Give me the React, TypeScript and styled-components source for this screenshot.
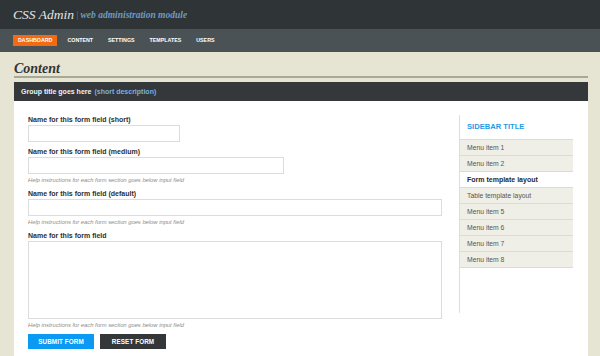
import React from 'react';
import styled, { createGlobalStyle } from 'styled-components';

const GlobalStyle = createGlobalStyle`
  html, body {
    margin: 0;
    padding: 0;
    background: #e6e4d3;
  }
  body {
    font-family: "Liberation Sans", Arial, sans-serif;
    width: 600px;
    height: 356px;
    overflow: hidden;
  }
`;

const Header = styled.div`
  height: 29px;
  background: #2f3437;
  display: flex;
  align-items: center;
  padding-left: 13px;
  font-family: "Liberation Serif", "Times New Roman", serif;
  font-style: italic;
`;

const Logo = styled.span`
  color: #e4e6e8;
  font-size: 13.5px;
  margin-right: 2px;
`;

const Tagline = styled.span`
  color: #6c9bc6;
  font-size: 9.5px;
  font-weight: bold;
  span {
    color: #5c7d98;
    font-weight: normal;
    margin-right: 2px;
  }
`;

const Nav = styled.div`
  height: 23px;
  background: #4b5256;
  display: flex;
  align-items: center;
  padding-left: 13px;
  gap: 5px;
`;

const NavItem = styled.a<{ $active?: boolean }>`
  display: block;
  padding: 0 5px;
  line-height: 11px;
  font-size: 5.3px;
  font-weight: bold;
  color: #fff;
  text-transform: uppercase;
  background: ${p => (p.$active ? '#f26a12' : 'transparent')};
`;

const Main = styled.div`
  padding: 0 12px 0 14px;
`;

const PageTitle = styled.h1`
  margin: 0;
  padding-top: 10px;
  height: 14px;
  line-height: 14px;
  font-family: "Liberation Serif", "Times New Roman", serif;
  font-style: italic;
  font-weight: bold;
  font-size: 14px;
  color: #2f3437;
  border-bottom: 2px solid #a9a796;
`;

const GroupBar = styled.div`
  margin-top: 4px;
  height: 19px;
  background: #34383b;
  display: flex;
  align-items: center;
  padding-left: 7px;
  font-size: 7px;
  font-weight: bold;
  color: #f2f2f2;
  span {
    color: #7ab0de;
    margin-left: 3px;
  }
`;

const Panel = styled.div`
  background: #fff;
  display: flex;
  padding: 14px 15px 0 14px;
  height: 242px;
`;

const Form = styled.form`
  width: 414px;
  margin-right: 17px;
`;

const Field = styled.div`
  margin-bottom: 5px;
`;

const Label = styled.label`
  display: block;
  font-size: 7px;
  line-height: 10px;
  font-weight: bold;
  color: #2e2e2e;
`;

const Input = styled.input<{ $width: number }>`
  display: block;
  box-sizing: border-box;
  width: ${p => p.$width}px;
  height: 17px;
  margin: 0;
  border: 1px solid #dcdcdc;
  background: #fff;
`;

const TextArea = styled.textarea`
  display: block;
  box-sizing: border-box;
  width: 414px;
  height: 78px;
  margin: 0;
  border: 1px solid #dcdcdc;
  resize: none;
`;

const Help = styled.div`
  margin-top: 2px;
  font-size: 5.8px;
  line-height: 8px;
  font-style: italic;
  color: #8c8c8c;
`;

const Buttons = styled.div`
  display: flex;
  gap: 6px;
  margin-top: 2px;
`;

const Button = styled.button<{ $dark?: boolean }>`
  width: 66px;
  height: 15px;
  padding: 0;
  border: none;
  font-family: "Liberation Sans", Arial, sans-serif;
  font-size: 6.3px;
  font-weight: bold;
  letter-spacing: 0.1px;
  color: #fff;
  background: ${p => (p.$dark ? '#33373a' : '#0a9af4')};
`;

const Sidebar = styled.div`
  width: 114px;
  height: 198px;
  border-left: 1px solid #dddddd;
`;

const SidebarTitle = styled.div`
  height: 24px;
  line-height: 24px;
  padding-left: 7px;
  font-size: 7.6px;
  font-weight: bold;
  color: #1f9ae6;
`;

const Menu = styled.ul`
  list-style: none;
  margin: 0;
  padding: 0;
`;

const MenuItem = styled.li<{ $active?: boolean }>`
  height: 15px;
  line-height: 15px;
  padding-left: 7px;
  border-top: 1px solid #dedcd2;
  font-size: ${p => (p.$active ? '7px' : '6.8px')};
  font-weight: ${p => (p.$active ? 'bold' : 'normal')};
  color: ${p => (p.$active ? '#2a2a2a' : '#555')};
  background: ${p => (p.$active ? '#fff' : '#f0efe7')};
  &:last-child {
    border-bottom: 1px solid #dedcd2;
  }
`;

const navItems = ['Dashboard', 'Content', 'Settings', 'Templates', 'Users'];

const menuItems = [
  'Menu item 1',
  'Menu item 2',
  'Form template layout',
  'Table template layout',
  'Menu item 5',
  'Menu item 6',
  'Menu item 7',
  'Menu item 8',
];

const helpText = 'Help instructions for each form section goes below input field';

export default function App() {
  return (
    <React.Fragment>
      <GlobalStyle />
      <Header>
        <Logo>CSS Admin</Logo>
        <Tagline><span>|</span>web administration module</Tagline>
      </Header>
      <Nav>
        {navItems.map((item, i) => (
          <NavItem key={item} $active={i === 0}>{item}</NavItem>
        ))}
      </Nav>
      <Main>
        <PageTitle>Content</PageTitle>
        <GroupBar>Group title goes here<span>(short description)</span></GroupBar>
        <Panel>
          <Form onSubmit={e => e.preventDefault()}>
            <Field>
              <Label>Name for this form field (short)</Label>
              <Input $width={152} />
            </Field>
            <Field>
              <Label>Name for this form field (medium)</Label>
              <Input $width={256} />
              <Help>{helpText}</Help>
            </Field>
            <Field>
              <Label>Name for this form field (default)</Label>
              <Input $width={414} />
              <Help>{helpText}</Help>
            </Field>
            <Field>
              <Label>Name for this form field</Label>
              <TextArea />
              <Help>{helpText}</Help>
            </Field>
            <Buttons>
              <Button type="submit">SUBMIT FORM</Button>
              <Button type="reset" $dark>RESET FORM</Button>
            </Buttons>
          </Form>
          <Sidebar>
            <SidebarTitle>SIDEBAR TITLE</SidebarTitle>
            <Menu>
              {menuItems.map(item => (
                <MenuItem key={item} $active={item === 'Form template layout'}>{item}</MenuItem>
              ))}
            </Menu>
          </Sidebar>
        </Panel>
      </Main>
    </React.Fragment>
  );
}
